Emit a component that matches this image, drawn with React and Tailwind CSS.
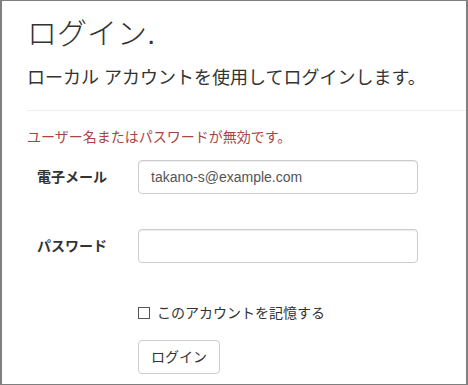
import React, { useState } from "react";

const font = { fontFamily: '"Liberation Sans", "Noto Sans CJK JP", sans-serif' };

export default function App() {
    const [email, setEmail] = useState("takano-s@example.com");
    const [password, setPassword] = useState("");
    const [remember, setRemember] = useState(false);

    return (
        <div style={font} className="w-[468px] h-[385px] overflow-hidden bg-white text-[#333] border-[#7f7f7f] border-t border-b border-l-2 border-r-2">
            <div className="pl-[25px]">
                <h2 className="pt-[16px] text-[30px] leading-[33px] font-light">ログイン.</h2>
                <h4 className="mt-[18px] text-[18px] leading-[20px] font-normal">ローカル アカウントを使用してログインします。</h4>
                <hr className="mt-[22px] border-[#eee]" />

                <p className="mt-[16px] text-[14px] leading-[20px] text-[#a94442]">ユーザー名またはパスワードが無効です。</p>

                <div className="mt-[13px] flex items-center">
                    <label className="w-[111px] pl-[10px] text-[14px] font-bold">電子メール</label>
                    <input
                        value={email}
                        onChange={(e) => setEmail(e.target.value)}
                        className="w-[280px] h-[34px] px-[12px] text-[14px] text-[#555] border border-[#ccc] rounded-[4px] shadow-[inset_0_1px_1px_rgba(0,0,0,0.075)] outline-none"
                    />
                </div>

                <div className="mt-[35px] flex items-center">
                    <label className="w-[111px] pl-[10px] text-[14px] font-bold">パスワード</label>
                    <input
                        type="password"
                        value={password}
                        onChange={(e) => setPassword(e.target.value)}
                        className="w-[280px] h-[34px] px-[12px] text-[14px] text-[#555] border border-[#ccc] rounded-[4px] shadow-[inset_0_1px_1px_rgba(0,0,0,0.075)] outline-none"
                    />
                </div>

                <label className="mt-[40px] ml-[111px] flex items-center text-[14px] leading-[20px] cursor-pointer">
                    <span
                        onClick={() => setRemember(!remember)}
                        className="w-[12px] h-[12px] border border-[#555] bg-white flex items-center justify-center text-[9px] leading-none"
                    >
                        {remember ? "✓" : ""}
                    </span>
                    <span className="ml-[7px]">このアカウントを記憶する</span>
                </label>

                <button className="mt-[17px] ml-[111px] h-[34px] px-[12px] text-[14px] text-[#333] bg-white border border-[#ccc] rounded-[4px]">
                    ログイン
                </button>
            </div>
        </div>
    );
}
